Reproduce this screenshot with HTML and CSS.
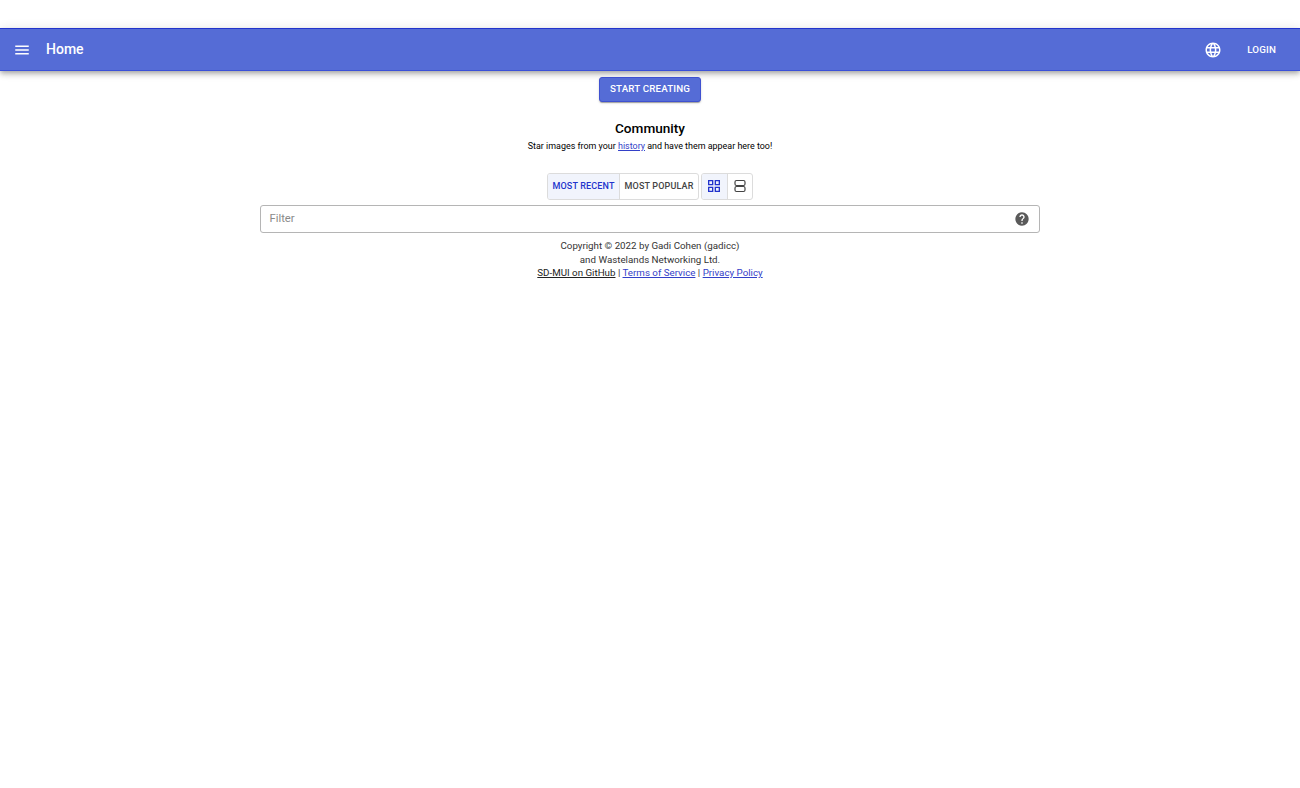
FILE: index.html
```html
<!DOCTYPE html>
<html lang="en">
<head>
<meta charset="utf-8">
<title>Home</title>
<link rel="stylesheet" href="styles.css">
</head>
<body>
<header class="appbar">
  <button class="icon-btn menu" aria-label="menu">
    <svg viewBox="0 0 24 24" width="18" height="18"><path d="M3 18h18v-2H3v2zm0-5h18v-2H3v2zm0-7v2h18V6H3z"/></svg>
  </button>
  <div class="title">Home</div>
  <button class="icon-btn lang" aria-label="language">
    <svg viewBox="0 0 24 24" width="18" height="18"><path d="M11.99 2C6.47 2 2 6.48 2 12s4.47 10 9.99 10C17.52 22 22 17.52 22 12S17.52 2 11.99 2zm6.93 6h-2.95c-.32-1.25-.78-2.45-1.38-3.56 1.84.63 3.37 1.91 4.33 3.56zM12 4.04c.83 1.2 1.48 2.53 1.91 3.96h-3.82c.43-1.43 1.08-2.76 1.91-3.96zM4.26 14C4.1 13.36 4 12.69 4 12s.1-1.36.26-2h3.38c-.08.66-.14 1.32-.14 2 0 .68.06 1.34.14 2H4.26zm.82 2h2.95c.32 1.25.78 2.45 1.38 3.56-1.84-.63-3.37-1.9-4.33-3.56zm2.95-8H5.08c.96-1.66 2.49-2.93 4.33-3.56C8.81 5.55 8.35 6.75 8.03 8zM12 19.96c-.83-1.2-1.48-2.53-1.91-3.96h3.82c-.43 1.43-1.08 2.76-1.91 3.96zM14.34 14H9.66c-.09-.66-.16-1.32-.16-2 0-.68.07-1.35.16-2h4.68c.09.65.16 1.32.16 2 0 .68-.07 1.34-.16 2zm.25 5.56c.6-1.11 1.06-2.31 1.38-3.56h2.95c-.96 1.65-2.49 2.93-4.33 3.56zM16.36 14c.08-.66.14-1.32.14-2 0-.68-.06-1.34-.14-2h3.38c.16.64.26 1.31.26 2s-.1 1.36-.26 2h-3.38z"/></svg>
  </button>
  <button class="login">Login</button>
</header>
<main class="content">
  <button class="cta">Start Creating</button>
  <h1 class="heading">Community</h1>
  <p class="sub">Star images from your <a href="#">history</a> and have them appear here too!</p>
  <div class="toggles">
    <div class="group">
      <button class="toggle on">Most Recent</button>
      <button class="toggle">Most Popular</button>
    </div>
    <div class="group">
      <button class="toggle square on">
        <svg viewBox="0 0 24 24" width="16" height="16"><path d="M3 3v8h8V3H3zm6 6H5V5h4v4zm-6 4v8h8v-8H3zm6 6H5v-4h4v4zm4-16v8h8V3h-8zm6 6h-4V5h4v4zm-6 4v8h8v-8h-8zm6 6h-4v-4h4v4z"/></svg>
      </button>
      <button class="toggle square">
        <svg class="rows" viewBox="0 0 16 16" width="16" height="16"><rect x="3" y="2.500" width="10" height="5" rx="1.500"/><rect x="3" y="8.500" width="10" height="5" rx="1.500"/></svg>
      </button>
    </div>
  </div>
  <div class="filter">
    <span class="placeholder">Filter</span>
    <svg class="help" viewBox="0 0 24 24" width="16" height="16"><path d="M12 2C6.480 2 2 6.480 2 12s4.480 10 10 10 10-4.480 10-10S17.520 2 12 2zm1 17h-2v-2h2v2zm2.070-7.750-.9.920C13.450 12.900 13 13.500 13 15h-2v-.5c0-1.100.450-2.100 1.170-2.830l1.240-1.260c.37-.36.590-.86.590-1.410 0-1.100-.9-2-2-2s-2 .9-2 2H8c0-2.210 1.790-4 4-4s4 1.790 4 4c0 .88-.36 1.680-.93 2.250z"/></svg>
  </div>
  <footer class="foot">
    <div>Copyright © 2022 by Gadi Cohen (gadicc)</div>
    <div>and Wastelands Networking Ltd.</div>
    <div><a class="dark" href="#">SD-MUI on GitHub</a> | <a href="#">Terms of Service</a> | <a href="#">Privacy Policy</a></div>
  </footer>
</main>
</body>
</html>
```
FILE: styles.css
```css
* { box-sizing: border-box; }
html, body { margin: 0; height: 100%; background: #fff; }
body { font-family: Roboto, "Liberation Sans", sans-serif; color: #000; padding-top: 28px; overflow: hidden; }
button { font-family: inherit; border: 0; background: none; padding: 0; cursor: pointer; }
.appbar {
  height: 43px; display: flex; align-items: center; padding: 0 13px;
  background: #556cd6; color: #fff;
  border-top: 1px solid #2233cc; border-bottom: 1px solid #3a50d8;
  box-shadow: 0 2px 4px -1px rgba(0,0,0,.2), 0 4px 5px rgba(0,0,0,.14), 0 1px 10px rgba(0,0,0,.12);
}
.icon-btn { display: flex; fill: #fff; }
.title { margin-left: 15px; font-size: 14px; line-height: 18px; padding-bottom: 1px; font-weight: 500; flex: 1; }
.login {
  margin-left: 25.5px; margin-right: 11px; color: #fff; font-size: 9.75px; font-weight: 500;
  text-transform: uppercase; letter-spacing: .15px;
}
.content { display: flex; flex-direction: column; align-items: center; }
.cta {
  margin-top: 6px; width: 102px; height: 25px; padding-bottom: 2px; border-radius: 3px;
  background: #556cd6; color: #fff; font-size: 9.75px; font-weight: 500;
  text-transform: uppercase; letter-spacing: .15px; border: 1px solid #3f51d0;
  box-shadow: 0 2px 1px -1px rgba(0,0,0,.2), 0 1px 1px rgba(0,0,0,.14), 0 1px 3px rgba(0,0,0,.12);
}
.heading { margin: 17px 0 1px; font-size: 13.6px; line-height: 18px; font-weight: 500; }
.sub { margin: 1px 0 0; font-size: 8.93px; line-height: 15px; }
.sub a, .foot a { color: #3340c8; text-underline-offset: 1px; }
.foot a.dark { color: #222; }
.toggles { display: flex; gap: 2px; margin-top: 19px; }
.group { display: flex; border: 1px solid #dcdcdc; border-radius: 3px; overflow: hidden; height: 27px; }
.toggle {
  padding: 0 4.5px 1px; font-size: 9px; font-weight: 500; letter-spacing: .15px;
  text-transform: uppercase; color: #444; display: flex; align-items: center; fill: #444;
}
.toggle + .toggle { border-left: 1px solid #dcdcdc; }
.toggle.on { background: #f1f4fc; color: #2233cc; fill: #2233cc; }
.toggle.square { padding: 0 4.25px 1px; }
.rows { fill: none; stroke: #444; stroke-width: 1.2; }
.filter {
  margin-top: 5px; width: 780px; height: 28px; border: 1px solid #b5b5b5; border-radius: 3px;
  display: flex; align-items: center; justify-content: space-between; padding: 0 9px 1px 8.5px;
}
.placeholder { font-size: 11.25px; color: #8a8a8a; }
.help { fill: #5a5a5a; }
.foot { margin-top: 6px; font-size: 9.75px; line-height: 13.5px; color: #333; text-align: center; }
```
